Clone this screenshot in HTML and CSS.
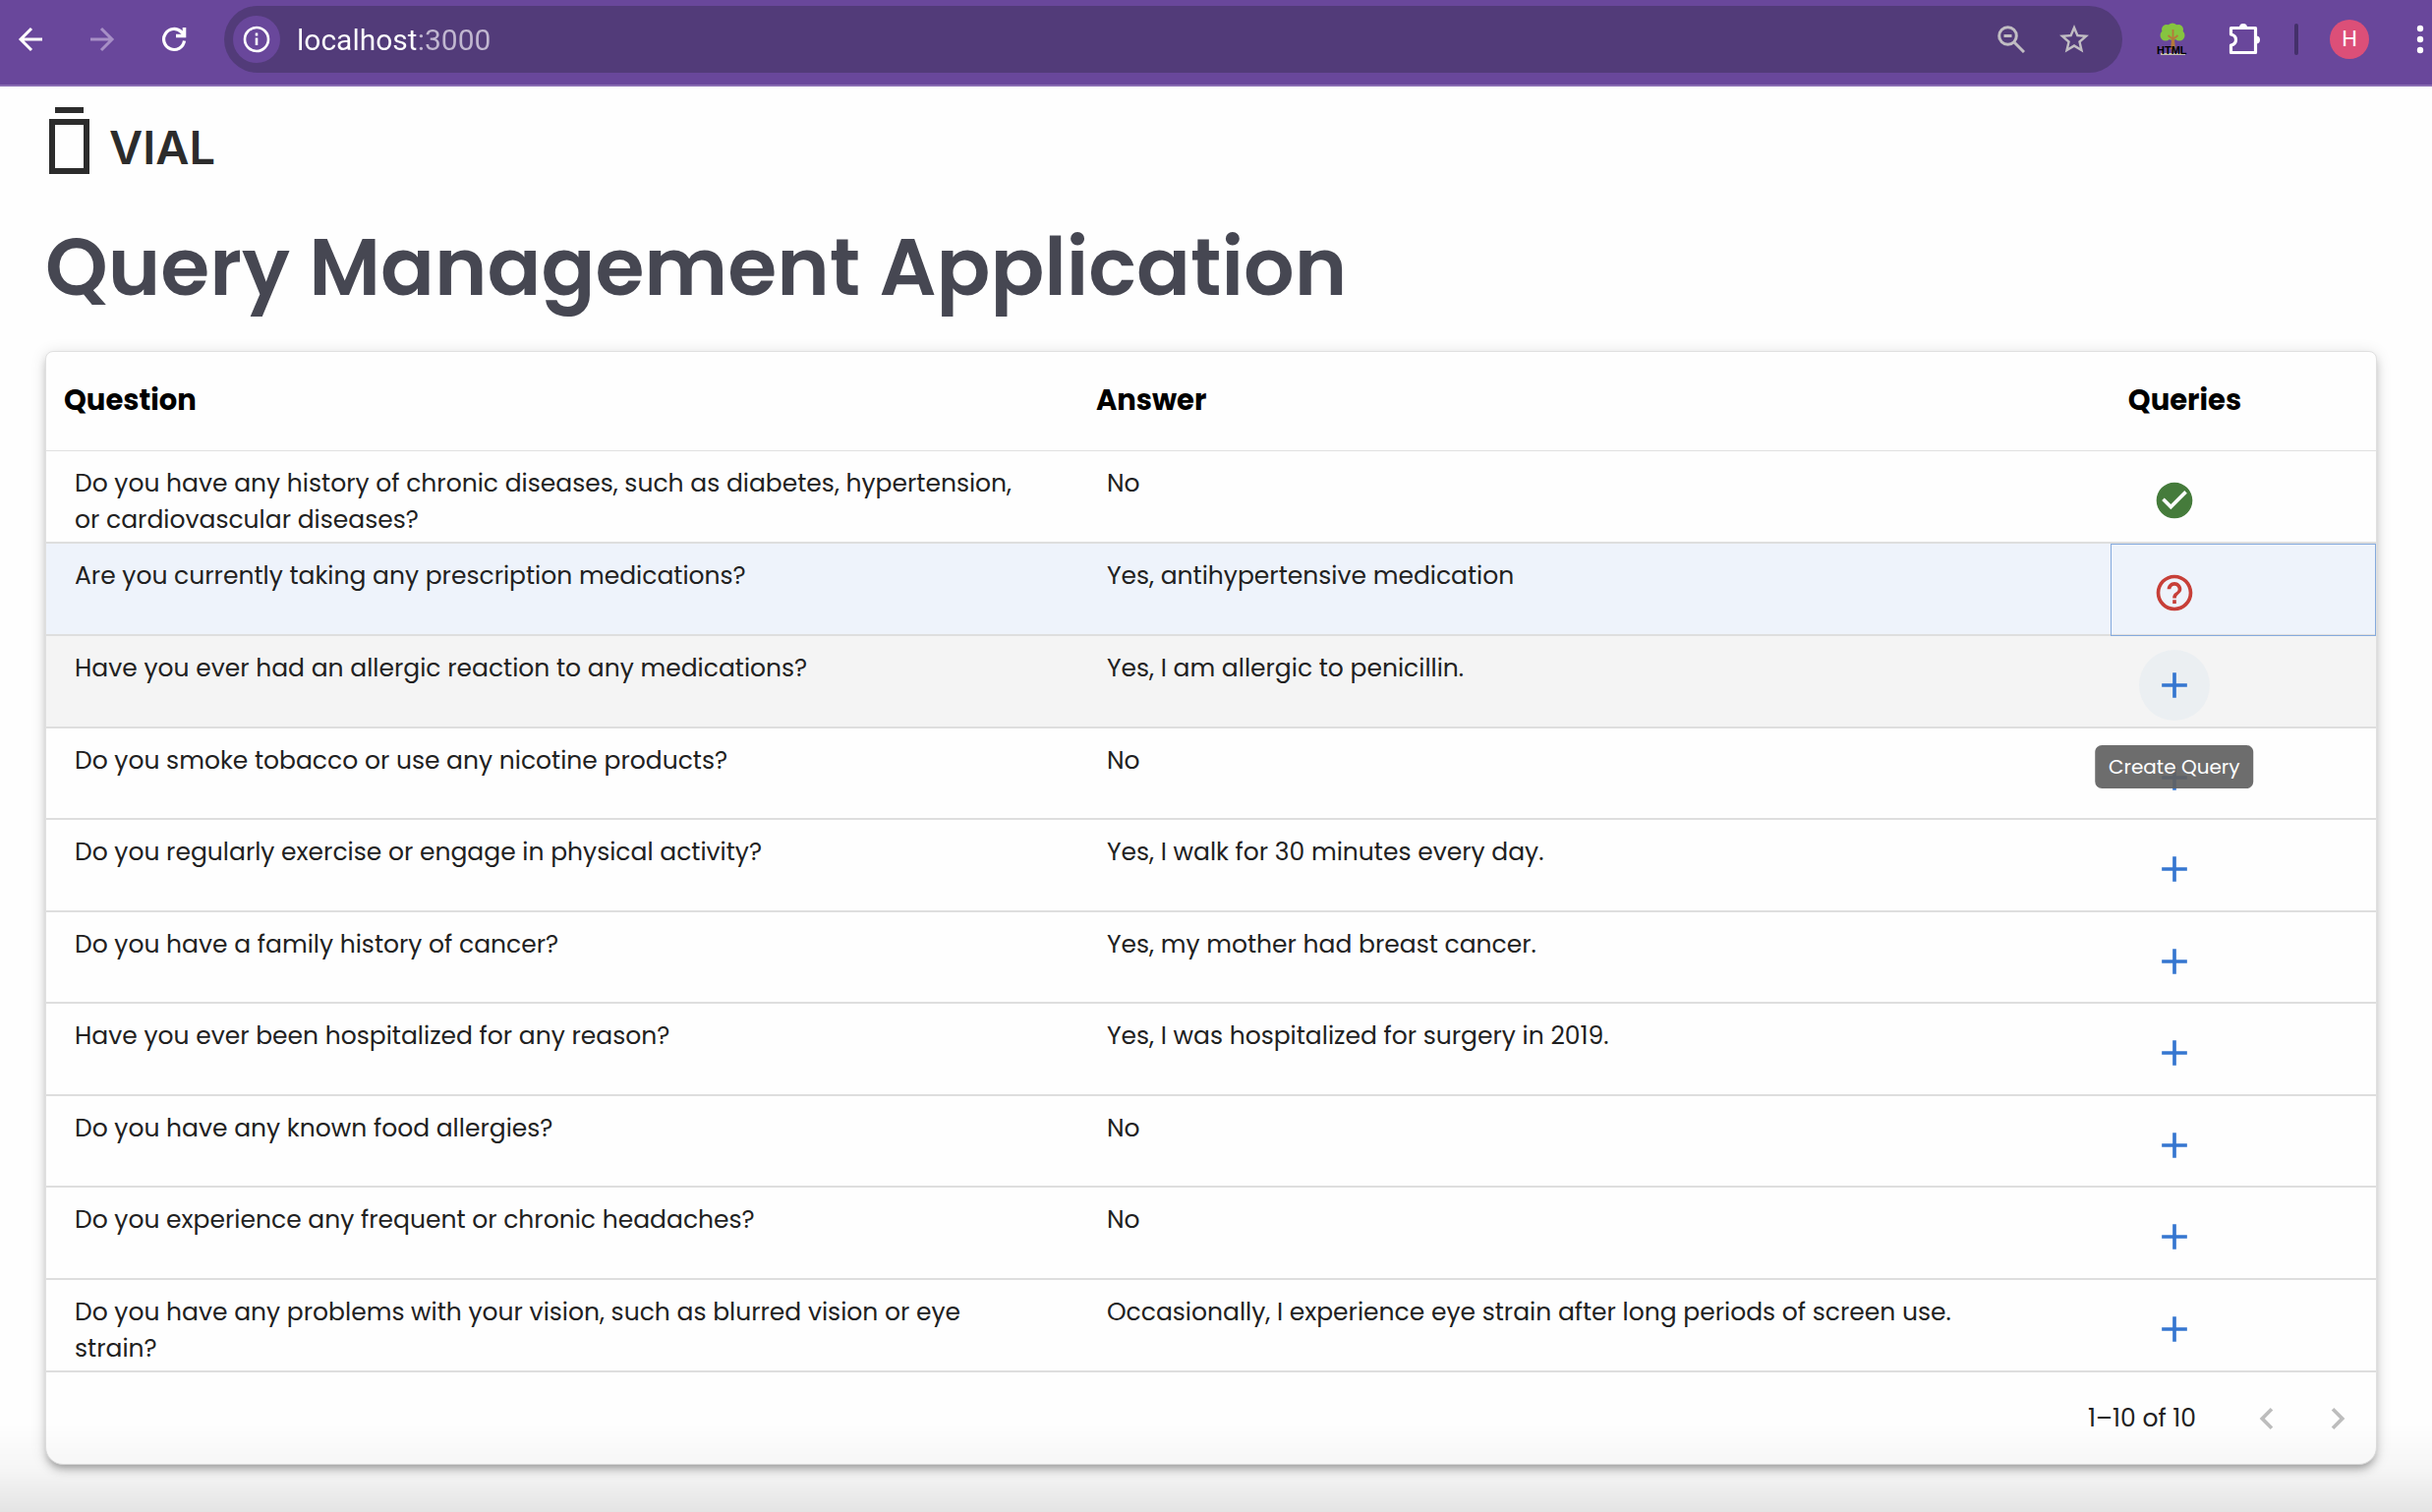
FILE: index.html
```html
<!DOCTYPE html>
<html lang="en">
<head>
<meta charset="utf-8">
<meta name="viewport" content="width=device-width, initial-scale=1">
<title>Query Management Application</title>
<link rel="stylesheet" href="styles.css">
</head>
<body>
<svg class="sprite" aria-hidden="true">
  <symbol id="add" viewBox="0 0 24 24"><path d="M19 13h-6v6h-2v-6H5v-2h6V5h2v6h6z"/></symbol>
  <symbol id="check" viewBox="0 0 24 24"><path d="M12 2C6.480 2 2 6.480 2 12s4.480 10 10 10 10-4.480 10-10S17.520 2 12 2m-2 15-5-5 1.410-1.410L10 14.170l7.590-7.590L19 8z"/></symbol>
  <symbol id="help" viewBox="0 0 24 24"><path d="M11 18h2v-2h-2zm1-16C6.480 2 2 6.480 2 12s4.480 10 10 10 10-4.480 10-10S17.520 2 12 2m0 18c-4.410 0-8-3.590-8-8s3.590-8 8-8 8 3.590 8 8-3.590 8-8 8m0-14c-2.210 0-4 1.790-4 4h2c0-1.100.9-2 2-2s2 .9 2 2c0 2-3 1.750-3 5h2c0-2.250 3-2.500 3-5 0-2.210-1.790-4-4-4"/></symbol>
</svg>

<header class="toolbar">
  <button class="tool" type="button" aria-label="Back">
    <svg width="26" height="26" viewBox="0 0 26 26" fill="none" stroke="currentColor" stroke-width="3"><path d="M25 13H3M14 2 3 13l11 11"/></svg>
  </button>
  <button class="tool tool-off" type="button" aria-label="Forward">
    <svg width="26" height="26" viewBox="0 0 26 26" fill="none" stroke="currentColor" stroke-width="3"><path d="M1 13h22M12 2l11 11-11 11"/></svg>
  </button>
  <button class="tool" type="button" aria-label="Reload">
    <svg width="26" height="26" viewBox="0 0 26 26" fill="none" stroke="currentColor" stroke-width="3.200"><path d="M23.500 14.500A10.500 10.500 0 1 1 20.500 5.500L23 8"/><path d="M23.500 1v8.500H15" stroke-width="3.600"/></svg>
  </button>
  <div class="omnibox">
    <button class="site-info" type="button" aria-label="View site information">
      <svg width="28" height="28" viewBox="0 0 28 28" fill="none" stroke="currentColor"><circle cx="14" cy="14" r="12" stroke-width="2.600"/><path d="M14 12.500V20M14 7.500v3" stroke-width="2.600"/></svg>
    </button>
    <input class="address" type="text" value="localhost:3000" aria-label="Address">
    <button class="tool tool-muted" type="button" aria-label="Zoom">
      <svg width="28" height="28" viewBox="0 0 28 28" fill="none" stroke="currentColor" stroke-width="3"><circle cx="10.500" cy="10.500" r="8.800"/><path d="M17 17l10 10M6.500 10.500h8"/></svg>
    </button>
    <button class="tool tool-muted" type="button" aria-label="Bookmark this page">
      <svg width="36" height="36" viewBox="0 0 24 24" fill="currentColor"><path d="m22 9.240-7.190-.62L12 2 9.190 8.630 2 9.240l5.460 4.730L5.820 21 12 17.270 18.180 21l-1.630-7.030zM12 15.400l-3.760 2.270 1-4.280-3.320-2.880 4.380-.38L12 6.100l1.710 4.040 4.380.38-3.320 2.880 1 4.280z"/></svg>
    </button>
  </div>
  <button class="tool" type="button" aria-label="HTML Tree extension">
    <svg width="32" height="34" viewBox="0 0 32 34">
      <path d="M4 31h25v2H4z" fill="#c4c0b4"/>
      <g fill="#86c440"><circle cx="10" cy="7" r="5"/><circle cx="16" cy="6" r="5.500"/><circle cx="22" cy="7" r="5"/><circle cx="9" cy="13" r="5.500"/><circle cx="23" cy="13" r="5.500"/><circle cx="16" cy="12" r="6"/></g>
      <path d="M16.500 7v23M16.500 17l-5-4M16.500 17l5-4" stroke="#b5793a" stroke-width="1.800" fill="none"/>
      <path d="M15 17h3l1 10h-5z" fill="#b5793a"/>
      <text class="tree-label" x="0" y="32">HTML</text>
    </svg>
  </button>
  <button class="tool" type="button" aria-label="Extensions">
    <svg width="34" height="34" viewBox="0 0 34 34"><path d="M3.500 5.500h25v25h-25v-7.500q5-1 5-5.500t-5-5.500z" fill="none" stroke="currentColor" stroke-width="3.200" stroke-linejoin="round"/><path d="M12 5a4 4 0 0 1 8 0zM29 13.500a4 4 0 0 1 0 8z" fill="currentColor"/></svg>
  </button>
  <span class="divider"></span>
  <button class="profile" type="button" aria-label="Profile"><span class="avatar">H</span></button>
  <button class="more" type="button" aria-label="Menu">
    <svg width="8" height="30" viewBox="0 0 8 30" fill="currentColor"><circle cx="4" cy="4" r="3.200"/><circle cx="4" cy="15" r="3.200"/><circle cx="4" cy="26" r="3.200"/></svg>
  </button>
</header>

<main class="page">
  <div class="brand">
    <svg width="41" height="68" viewBox="0 0 41 68" fill="#2c2c2c" aria-hidden="true"><path d="M6 0h29v6H6z"/><path d="M3 15h35v50H3z" fill="none" stroke="#2c2c2c" stroke-width="6"/></svg>
    <span class="brand-name">VIAL</span>
  </div>
  <h1 class="title">Query Management Application</h1>

  <section class="card">
    <table class="grid">
      <colgroup><col class="col-text"><col class="col-text"><col></colgroup>
      <thead>
        <tr><th scope="col">Question</th><th scope="col">Answer</th><th scope="col">Queries</th></tr>
      </thead>
      <tbody>
        <tr>
          <td>Do you have any history of chronic diseases, such as diabetes, hypertension, or cardiovascular diseases?</td>
          <td>No</td>
          <td class="query"><button class="action resolved" type="button" aria-label="Resolved query"><svg><use href="#check"/></svg></button></td>
        </tr>
        <tr class="selected">
          <td>Are you currently taking any prescription medications?</td>
          <td>Yes, antihypertensive medication</td>
          <td class="query focused"><button class="action open" type="button" aria-label="Open query"><svg><use href="#help"/></svg></button></td>
        </tr>
        <tr class="hovered">
          <td>Have you ever had an allergic reaction to any medications?</td>
          <td>Yes, I am allergic to penicillin.</td>
          <td class="query"><button class="action active" type="button" aria-describedby="tip"><svg><use href="#add"/></svg><span class="tooltip" id="tip" role="tooltip">Create Query</span></button></td>
        </tr>
        <tr>
          <td>Do you smoke tobacco or use any nicotine products?</td>
          <td>No</td>
          <td class="query"><button class="action" type="button" aria-label="Create Query"><svg><use href="#add"/></svg></button></td>
        </tr>
        <tr>
          <td>Do you regularly exercise or engage in physical activity?</td>
          <td>Yes, I walk for 30 minutes every day.</td>
          <td class="query"><button class="action" type="button" aria-label="Create Query"><svg><use href="#add"/></svg></button></td>
        </tr>
        <tr>
          <td>Do you have a family history of cancer?</td>
          <td>Yes, my mother had breast cancer.</td>
          <td class="query"><button class="action" type="button" aria-label="Create Query"><svg><use href="#add"/></svg></button></td>
        </tr>
        <tr>
          <td>Have you ever been hospitalized for any reason?</td>
          <td>Yes, I was hospitalized for surgery in 2019.</td>
          <td class="query"><button class="action" type="button" aria-label="Create Query"><svg><use href="#add"/></svg></button></td>
        </tr>
        <tr>
          <td>Do you have any known food allergies?</td>
          <td>No</td>
          <td class="query"><button class="action" type="button" aria-label="Create Query"><svg><use href="#add"/></svg></button></td>
        </tr>
        <tr>
          <td>Do you experience any frequent or chronic headaches?</td>
          <td>No</td>
          <td class="query"><button class="action" type="button" aria-label="Create Query"><svg><use href="#add"/></svg></button></td>
        </tr>
        <tr>
          <td>Do you have any problems with your vision, such as blurred vision or eye strain?</td>
          <td>Occasionally, I experience eye strain after long periods of screen use.</td>
          <td class="query"><button class="action" type="button" aria-label="Create Query"><svg><use href="#add"/></svg></button></td>
        </tr>
      </tbody>
    </table>
    <footer class="pager">
      <span class="range">1–10 of 10</span>
      <button class="page-btn" type="button" aria-label="Previous page" disabled><svg viewBox="0 0 24 24"><path d="M15.410 7.410 14 6l-6 6 6 6 1.410-1.410L10.830 12z"/></svg></button>
      <button class="page-btn" type="button" aria-label="Next page" disabled><svg viewBox="0 0 24 24"><path d="M10 6 8.590 7.410 13.170 12l-4.580 4.590L10 18l6-6z"/></svg></button>
    </footer>
  </section>
</main>
</body>
</html>
```
FILE: styles.css
```css
* {
  box-sizing: border-box;
}

body {
  margin: 0;
  min-height: 100vh;
  background: #fefefe;
  color: #212121;
  font-family: Poppins, Inter, sans-serif;
  font-size: 25px;
  line-height: 37px;
}

/* soft shade along the lower edge of the window */
body::after {
  content: "";
  position: fixed;
  right: 0;
  bottom: 0;
  left: 0;
  height: 90px;
  background: linear-gradient(rgba(0, 0, 0, 0), rgba(0, 0, 0, .03) 50%, rgba(0, 0, 0, .1));
  pointer-events: none;
}

button {
  display: flex;
  align-items: center;
  justify-content: center;
  flex: none;
  padding: 0;
  border: 0;
  background: none;
  color: inherit;
  font: inherit;
}

.sprite {
  display: none;
}

/* browser toolbar */
.toolbar {
  display: flex;
  align-items: center;
  gap: 29px;
  height: 88px;
  padding: 0 0 6px 9px;
  border-bottom: 2px solid #8a6db3;
  background: #69479b;
  color: #fff;
  font-family: Roboto, sans-serif;
}

.tool {
  width: 44px;
  height: 44px;
}

.tool-off {
  color: #a78fc6;
}

.tool-muted {
  color: #c1bdc3;
}

.tool-muted + .tool-muted {
  margin-left: 3px;
}

.omnibox {
  display: flex;
  flex: 1;
  align-items: center;
  gap: 17px;
  height: 68px;
  padding: 0 27px 0 9px;
  border-radius: 34px;
  background: #523b79;
}

.site-info {
  width: 48px;
  height: 48px;
  border-radius: 50%;
  background: #69479b;
}

.address {
  flex: 1;
  min-width: 0;
  height: 48px;
  padding: 0;
  border: 0;
  outline: 0;
  background: linear-gradient(90deg, #fff 121px, #c1b7d0 121px);
  background-clip: text;
  -webkit-background-clip: text;
  -webkit-text-fill-color: transparent;
  color: #fff;
  font-family: Roboto, sans-serif;
  font-size: 30px;
}

.tree-label {
  fill: #000;
  font-family: "Liberation Sans", sans-serif;
  font-size: 11px;
  font-weight: 700;
}

.divider {
  width: 4px;
  height: 32px;
  border-radius: 2px;
  background: #44306a;
}

.profile {
  width: 46px;
  height: 46px;
}

.avatar {
  width: 40px;
  height: 40px;
  border-radius: 50%;
  background: #dc4f78;
  font-size: 22px;
  line-height: 40px;
}

.more {
  width: 24px;
  height: 44px;
  margin-left: 8px;
}

/* page */
.page {
  padding: 21px 56px 48px 46px;
}

.brand {
  display: flex;
  align-items: center;
  gap: 20px;
  padding-left: 4px;
}

.brand-name {
  padding-top: 14px;
  color: #2c2c2c;
  font-family: Inter, sans-serif;
  font-size: 47px;
  font-weight: 600;
  line-height: 54px;
}

.title {
  margin: 35px 0 25px;
  color: #464752;
  font-size: 81px;
  font-weight: 600;
  line-height: 120px;
}

.card {
  border: 1px solid #e0e0e0;
  border-radius: 8px 8px 18px 18px;
  background: #fefefe;
  box-shadow: 0 6px 6px -4px rgba(0, 0, 0, .2), 0 6px 8px rgba(0, 0, 0, .14), 0 2px 16px rgba(0, 0, 0, .12);
}

.grid {
  width: 100%;
  table-layout: fixed;
  border-collapse: separate;
  border-spacing: 0;
}

.col-text {
  width: 44.3%;
}

.grid th {
  height: 101px;
  padding: 0 18px 2px;
  border-bottom: 1px solid #e0e0e0;
  color: #000;
  font-size: 29px;
  font-weight: 700;
  text-align: left;
}

.grid td {
  height: 94px;
  padding: 14px 48px 0 29px;
  border-bottom: 2px solid #dedede;
  vertical-align: top;
}

.grid tr:is(:nth-child(4), :nth-child(6), :nth-child(8)) td {
  height: 93px;
}

.selected {
  background: #eef3fb;
}

.hovered {
  background: #f4f4f4;
}

.grid .focused {
  outline: 1px solid #85aadd;
  outline-offset: -1px;
}

.action {
  position: relative;
  width: 72px;
  height: 72px;
  border-radius: 50%;
  color: #3576d0;
}

.action svg {
  width: 44px;
  height: 44px;
  fill: currentColor;
}

.resolved {
  color: #457b3b;
}

.open {
  color: #c73f38;
}

.active {
  background: #ebeff2;
}

.tooltip {
  position: absolute;
  top: 97px;
  left: 50%;
  z-index: 1;
  padding: 4px 14px;
  border-radius: 7px;
  background: rgba(97, 97, 97, .92);
  color: #fff;
  font-size: 20px;
  line-height: 36px;
  white-space: nowrap;
  transform: translateX(-50%);
}

.pager {
  display: flex;
  align-items: center;
  justify-content: flex-end;
  gap: 28px;
  height: 93px;
  padding-right: 17px;
}

.range {
  margin-right: 22px;
}

.page-btn {
  width: 44px;
  height: 44px;
}

.page-btn svg {
  width: 44px;
  height: 44px;
  fill: #bdbdbd;
}
```
